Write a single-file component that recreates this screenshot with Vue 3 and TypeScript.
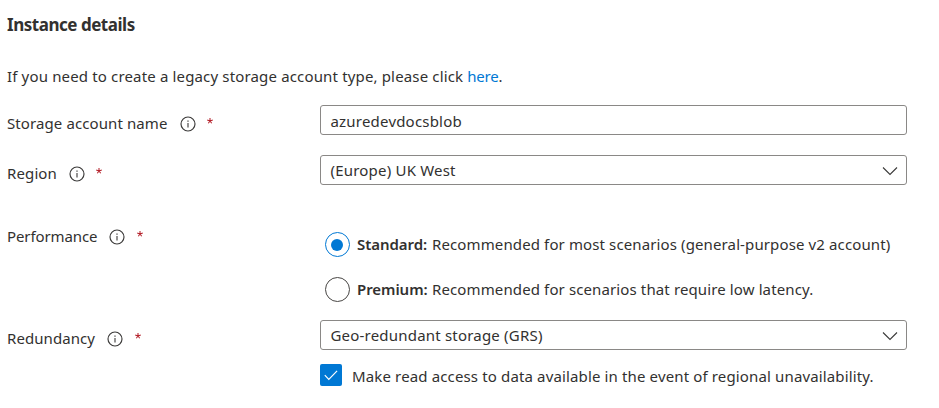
<script setup lang="ts">
import { ref } from 'vue'

interface Field {
  id: string
  label: string
  kind: 'text' | 'select' | 'radio'
  value?: string
}

const fields: Field[] = [
  { id: 'name', label: 'Storage account name', kind: 'text', value: 'azuredevdocsblob' },
  { id: 'region', label: 'Region', kind: 'select', value: '(Europe) UK West' },
  { id: 'performance', label: 'Performance', kind: 'radio' },
  { id: 'redundancy', label: 'Redundancy', kind: 'select', value: 'Geo-redundant storage (GRS)' },
]

const tiers = [
  { id: 'standard', title: 'Standard:', text: 'Recommended for most scenarios (general-purpose v2 account)' },
  { id: 'premium', title: 'Premium:', text: 'Recommended for scenarios that require low latency.' },
]

const tier = ref('standard')
const readAccess = ref(true)
</script>

<template>
  <section class="panel">
    <h2 class="heading">Instance details</h2>
    <p class="note">If you need to create a legacy storage account type, please click <a class="link">here</a>.</p>

    <div v-for="f in fields" :key="f.id" class="row" :class="f.id">
      <div class="label">
        <span class="label-text">{{ f.label }}</span>
        <svg class="info" width="16" height="16" viewBox="0 0 16 16" fill="none">
          <circle cx="8" cy="8" r="7" stroke="#3b3a39" stroke-width="1.15" />
          <path d="M8 7v4.4" stroke="#3b3a39" stroke-width="1.1" />
          <path d="M8 4.5v1.3" stroke="#3b3a39" stroke-width="1.2" />
        </svg>
        <svg class="star" width="8" height="8" viewBox="0 0 8 8" fill="none">
          <path d="M4 4V1M4 4l2.8-.9M4 4l1.7 2.3M4 4L2.3 6.3M4 4L1.2 3.1" stroke="#b5222c" stroke-width="1.05" />
        </svg>
      </div>

      <div v-if="f.kind === 'radio'" class="radios">
        <div v-for="t in tiers" :key="t.id" class="radio" :class="t.id" @click="tier = t.id">
          <span class="ring" :class="{ on: tier === t.id }"></span>
          <span class="tier-title">{{ t.title }}</span>
          <span class="tier-text">{{ t.text }}</span>
        </div>
      </div>
      <div v-else class="box">
        <span class="value">{{ f.value }}</span>
        <svg v-if="f.kind === 'select'" class="chevron" width="16" height="10" viewBox="0 0 16 10" fill="none">
          <path d="M1 1.5l7 7 7-7" stroke="#3b3a39" stroke-width="1.1" />
        </svg>
      </div>
    </div>

    <div class="check" @click="readAccess = !readAccess">
      <span class="tick" :class="{ on: readAccess }">
        <svg v-if="readAccess" width="22" height="22" viewBox="0 0 22 22" fill="none">
          <path d="M4.8 11.2l4 4.1 8.3-8.4" stroke="#fff" stroke-width="1.2" />
        </svg>
      </span>
      <span class="check-text">Make read access to data available in the event of regional unavailability.</span>
    </div>
  </section>
</template>

<style>
body {
  background: #fff;
}
</style>

<style scoped>
.panel {
  box-sizing: border-box;
  width: 939px;
  height: 408px;
  padding: 15px 32px 0 7px;
  overflow: hidden;
  font: 15px/20px "Noto Sans", "Open Sans", sans-serif;
  letter-spacing: 0.14px;
  color: #323130;
  white-space: nowrap;
}
.heading {
  margin: 0 0 31px;
  font-size: 17px;
  line-height: 20px;
  font-weight: 700;
  letter-spacing: -0.47px;
}
.note {
  margin: 0 0 19px;
  letter-spacing: 0.155px;
}
.link {
  color: #0078d4;
  letter-spacing: -0.25px;
}
.row {
  display: grid;
  grid-template-columns: 313px 587px;
  align-items: start;
  margin-bottom: 20px;
}
.label {
  display: flex;
  align-items: flex-start;
  padding-top: 8px;
}
.name .label-text {
  letter-spacing: 0.1px;
}
.region .label-text {
  letter-spacing: 0.12px;
}
.performance .label-text {
  letter-spacing: -0.1px;
}
.redundancy .label-text {
  letter-spacing: 0.07px;
}
.info {
  margin: 2.5px 0 0 12px;
}
.star {
  margin: 4px 0 0 10.5px;
}
.box {
  box-sizing: border-box;
  display: flex;
  align-items: center;
  justify-content: space-between;
  height: 30px;
  padding: 0 8.5px 0 9.5px;
  border: 1px solid #8a8886;
  border-radius: 3px;
}
.value {
  letter-spacing: 0.2px;
}
.name .value {
  padding-top: 2px;
}
.chevron {
  margin-top: 2px;
}
.performance {
  margin-top: 41px;
  margin-bottom: 18px;
}
.performance .label {
  padding-top: 0;
}
.radios {
  display: grid;
  gap: 20px;
  padding: 6px 0 0 5px;
}
.radio {
  display: flex;
  align-items: flex-start;
  height: 25px;
}
.tier-title,
.tier-text {
  padding-top: 2px;
}
.ring {
  box-sizing: border-box;
  display: grid;
  place-items: center;
  width: 25px;
  height: 25px;
  margin-right: 7px;
  border: 1px solid #484644;
  border-radius: 50%;
}
.ring.on {
  border-color: #0078d4;
}
.ring.on::after {
  content: "";
  width: 12px;
  height: 12px;
  margin-right: 1px;
  border-radius: 50%;
  background: #0078d4;
}
.tier-title {
  width: 75px;
  font-weight: 600;
  letter-spacing: -0.05px;
}
.tier-text {
  letter-spacing: 0.12px;
}
.redundancy {
  margin-bottom: 14px;
}
.check {
  display: flex;
  align-items: flex-start;
  padding-left: 313px;
}
.tick {
  box-sizing: border-box;
  width: 22px;
  height: 22px;
  margin-right: 10px;
  border: 1px solid #323130;
  border-radius: 2px;
}
.tick.on {
  border: 0;
  background: #0078d4;
}
.tick svg {
  display: block;
}
.check-text {
  padding-top: 2px;
}
</style>
